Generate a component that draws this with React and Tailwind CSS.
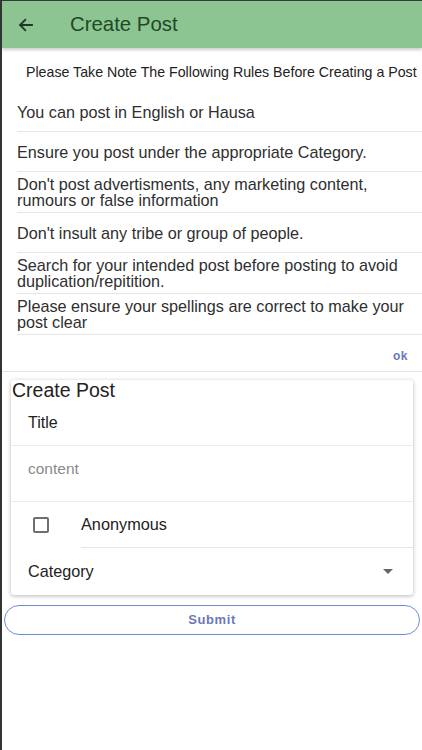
import React from "react";

const rules = [
  "You can post in English or Hausa",
  "Ensure you post under the appropriate Category.",
  "Don't post advertisments, any marketing content, rumours or false information",
  "Don't insult any tribe or group of people.",
  "Search for your intended post before posting to avoid duplication/repitition.",
  "Please ensure your spellings are correct to make your post clear",
];

export default function App() {
  return (
    <div
      className="w-[422px] h-[750px] bg-white border-l-2 border-[#333] overflow-hidden flex flex-col"
      style={{ fontFamily: '"Liberation Sans", Arial, sans-serif' }}
    >
      <div className="h-[1px] bg-[#2f3f33]" />
      <div className="h-[47px] bg-[#8cc492] flex items-center shadow-[0_2px_3px_rgba(0,0,0,0.2)] relative z-10">
        <svg width="18" height="18" viewBox="0 0 24 24" className="ml-[15px]" fill="none" stroke="#1d3b22" strokeWidth="2.4" strokeLinecap="square">
          <path d="M20 12H5M11 5l-7 7 7 7" />
        </svg>
        <span className="ml-[35px] text-[20.4px] text-[#1e4a28]">Create Post</span>
      </div>
      <div className="pt-[15px] pl-[24px] text-[14.2px] text-[#222] leading-[18px] whitespace-nowrap">
        Please Take Note The Following Rules Before Creating a Post
      </div>
      <div className="mt-[11px] pl-[15px]">
        {rules.map((r, i) => (
          <div
            key={i}
            className="border-b border-[#e6e6e6] text-[16.2px] text-[#2f2f2f] leading-[16px] pr-[12px] flex items-center min-h-[40px] py-[4px]"
          >
            <span>{r}</span>
          </div>
        ))}
      </div>
      <div className="h-[37px] flex items-center justify-end pr-[14px] pt-[6px] border-b border-[#e4e4e4]">
        <span className="text-[12px] font-bold text-[#6b78c0] tracking-[0.5px]">ok</span>
      </div>
      <div className="mx-[9px] mt-[8px] bg-white rounded-[3px] shadow-[0_1px_4px_rgba(0,0,0,0.28)]">
        <div className="pl-[1px] text-[19.5px] text-[#222] leading-[20px]">Create Post</div>
        <div className="h-[46px] flex items-center pl-[17px] border-b border-[#ececec] text-[16px] text-[#222]">Title</div>
        <div className="h-[56px] flex items-start pt-[14px] pl-[17px] border-b border-[#ececec] text-[15.5px] leading-[18px] text-[#8a8a8a]">content</div>
        <div className="h-[46px] flex items-center">
          <div className="w-[16px] h-[16px] border-2 border-[#6f6f6f] rounded-[2px] ml-[22px]" />
          <div className="ml-[32px] flex-1 h-full flex items-center border-b border-[#e6e6e6] text-[16.3px] text-[#222]">Anonymous</div>
        </div>
        <div className="h-[47px] flex items-center justify-between pl-[17px] pr-[20px] text-[16.2px] text-[#222]">
          <span>Category</span>
          <svg width="10" height="5" viewBox="0 0 10 5">
            <path d="M0 0h10L5 5z" fill="#666" />
          </svg>
        </div>
      </div>
      <div className="mx-[2px] mt-[10px] h-[30px] rounded-full border-[1.5px] border-[#6a8ed6] flex items-center justify-center">
        <span className="text-[13px] font-bold text-[#6e78b6] tracking-[0.6px]">Submit</span>
      </div>
    </div>
  );
}
